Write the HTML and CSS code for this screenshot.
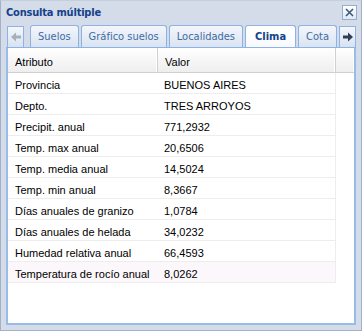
FILE: index.html
```html
<!DOCTYPE html>
<html lang="es">
<head>
    <meta charset="UTF-8">
    <title>Consulta múltiple</title>
    <link rel="stylesheet" href="styles.css">
</head>
<body>
    <div class="window">
        <div class="window-header">
            <span class="window-title">Consulta múltiple</span>
            <div class="window-close">
                <svg width="11" height="11" viewBox="0 0 11 11"><path d="M2 2 L9 9 M9 2 L2 9" stroke="#3d5878" stroke-width="1.6"/></svg>
            </div>
        </div>
        <div class="tabpanel">
            <div class="tab-strip">
                <div class="tab-scroller">
                    <svg width="10" height="10" viewBox="0 0 10 10"><path d="M0 5 L5 0.5 V3.5 H10 V6.5 H5 V9.5 Z" fill="#a7afba"/></svg>
                </div>
                <ul class="tabs">
                    <li class="tab">Suelos</li>
                    <li class="tab">Gráfico suelos</li>
                    <li class="tab">Localidades</li>
                    <li class="tab active">Clima</li>
                    <li class="tab">Cota</li>
                </ul>
                <div class="tab-scroller right">
                    <svg width="10" height="10" viewBox="0 0 10 10"><path d="M10 5 L5 0.5 V3.5 H0 V6.5 H5 V9.5 Z" fill="#2f3f55"/></svg>
                </div>
            </div>
            <div class="tab-body">
                <div class="grid-header">
                    <div class="hd-cell">Atributo</div>
                    <div class="hd-cell">Valor</div>
                    <div class="hd-cell"></div>
                </div>
                <div class="grid-rows">
                    <div class="row"><div class="cell">Provincia</div><div class="cell">BUENOS AIRES</div></div>
                    <div class="row"><div class="cell">Depto.</div><div class="cell">TRES ARROYOS</div></div>
                    <div class="row"><div class="cell">Precipit. anual</div><div class="cell">771,2932</div></div>
                    <div class="row"><div class="cell">Temp. max anual</div><div class="cell">20,6506</div></div>
                    <div class="row"><div class="cell">Temp. media anual</div><div class="cell">14,5024</div></div>
                    <div class="row"><div class="cell">Temp. min anual</div><div class="cell">8,3667</div></div>
                    <div class="row"><div class="cell">Días anuales de granizo</div><div class="cell">1,0784</div></div>
                    <div class="row"><div class="cell">Días anuales de helada</div><div class="cell">34,0232</div></div>
                    <div class="row"><div class="cell">Humedad relativa anual</div><div class="cell">66,4593</div></div>
                    <div class="row over"><div class="cell">Temperatura de rocío anual</div><div class="cell">8,0262</div></div>
                </div>
            </div>
        </div>
    </div>
</body>
</html>
```

FILE: styles.css
```css
/* General styling */
body {
    margin: 0;
    font-family: "DejaVu Sans Condensed", "DejaVu Sans", sans-serif;
    font-size: 11px;
}
.window {
    width: 362px;
    height: 331px;
    box-sizing: border-box;
    border: 1px solid #a3b1c5;
    border-top-color: #c4cfdd;
    background-color: #d3dce8; /* Frame colour */
    padding: 0 5px 5px 5px;
    display: flex;
    flex-direction: column;
}
.window-header {
    height: 22px;
    display: flex;
    align-items: center;
    justify-content: space-between;
}
.window-title {
    font-weight: bold;
    color: #15428b;
    padding-top: 1px;
    letter-spacing: -0.2px;
}
.window-close {
    width: 13px;
    height: 13px;
    border: 1px solid #94aed2;
    background: linear-gradient(#ffffff, #dfe8f4);
    display: flex;
    align-items: center;
    justify-content: center;
    margin-right: -1px;
}
.tabpanel {
    flex: 1;
    display: flex;
    flex-direction: column;
}
.tab-strip {
    height: 24px;
    display: flex;
    align-items: flex-end;
    border-bottom: 1px solid #8db2e3;
    padding-left: 1px;
}
.tab-scroller {
    flex: none;
    width: 17px;
    height: 21px;
    box-sizing: border-box;
    border: 1px solid #8db2e3;
    border-bottom: none;
    background: linear-gradient(#f4f7fb, #d7e2f1);
    display: flex;
    align-items: center;
    justify-content: center;
}
.tab-scroller.right {
    margin-left: auto;
}
.tabs {
    list-style: none;
    margin: 0 0 0 6px;
    padding: 0;
    display: flex;
    gap: 2px;
    overflow: hidden;
}
.tab {
    height: 22px;
    box-sizing: border-box;
    padding: 4px 7px 0 7px;
    border: 1px solid #8db2e3;
    border-bottom: none;
    border-radius: 3px 3px 0 0;
    background: linear-gradient(#f3f6fb, #d9e4f2);
    color: #416aa3;
    white-space: nowrap;
}
.tab.active {
    background: linear-gradient(#ffffff, #f6f9fd);
    color: #15428b;
    font-weight: bold;
    height: 23px;
    margin-bottom: -1px;
    padding-left: 9px;
    padding-right: 9px;
}
.tab-body {
    flex: 1;
    background-color: #ffffff;
    border: 2px solid #99bbe8;
    border-top: none;
    font-family: "Liberation Sans", Arial, sans-serif;
    font-size: 11px;
    color: #000000;
}
.grid-header {
    display: grid;
    grid-template-columns: 150px 178px 1fr;
    height: 24px;
    background: linear-gradient(#ffffff, #eeeeee);
    border-bottom: 1px solid #d0d0d0;
}
.hd-cell {
    padding: 8px 0 0 7px;
    border-right: 1px solid #d0d0d0;
    box-shadow: inset -1px 0 0 #ffffff;
}
.hd-cell:last-child {
    border-right: none;
}
.row {
    width: 328px;
    box-sizing: border-box;
    height: 21px;
    display: grid;
    grid-template-columns: 150px 1fr;
    border-right: 1px solid #ededed;
    border-bottom: 1px solid #ededed;
}
.row.over {
    background-color: #fbf7fb;
}
.cell {
    padding: 6px 0 0 7px;
}
.cell:last-child {
    padding-left: 6px;
}
```
